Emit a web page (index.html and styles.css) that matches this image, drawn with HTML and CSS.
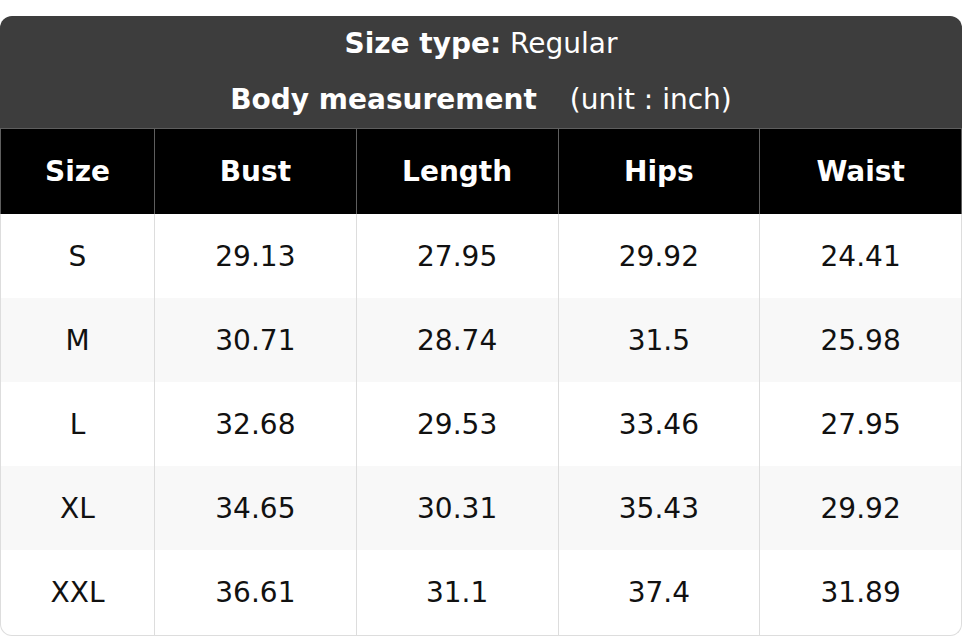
FILE: index.html
```html
<!DOCTYPE html>
<html>
<head>
<meta charset="utf-8">
<link rel="stylesheet" href="styles.css">
</head>
<body>
<div class="card">
  <div class="title">
    <div class="title-line first"><b>Size type:</b> Regular</div>
    <div class="title-line second"><b>Body measurement</b><span class="unit">(unit : inch)</span></div>
  </div>
  <table class="chart">
    <colgroup>
      <col class="c-size"><col><col><col><col>
    </colgroup>
    <thead>
      <tr><th>Size</th><th>Bust</th><th>Length</th><th>Hips</th><th>Waist</th></tr>
    </thead>
    <tbody>
      <tr><td>S</td><td>29.13</td><td>27.95</td><td>29.92</td><td>24.41</td></tr>
      <tr><td>M</td><td>30.71</td><td>28.74</td><td>31.5</td><td>25.98</td></tr>
      <tr><td>L</td><td>32.68</td><td>29.53</td><td>33.46</td><td>27.95</td></tr>
      <tr><td>XL</td><td>34.65</td><td>30.31</td><td>35.43</td><td>29.92</td></tr>
      <tr><td>XXL</td><td>36.61</td><td>31.1</td><td>37.4</td><td>31.89</td></tr>
    </tbody>
  </table>
</div>
</body>
</html>
```

FILE: styles.css
```css
html, body {
  margin: 0;
  padding: 0;
  background: #ffffff;
}
body {
  padding-top: 16px;
  font-family: "DejaVu Sans", sans-serif;
  font-size: 28px;
}
.card {
  width: 962px;
  border-radius: 12px 12px 0 0;
  overflow: hidden;
}
.title {
  background: #3d3d3d;
  color: #ffffff;
  text-align: center;
  padding: 8px 0 8px;
}
.title-line {
  line-height: 40px;
  white-space: nowrap;
}
.title-line.second {
  margin-top: 16px;
}
.title b {
  font-weight: bold;
}
.unit {
  padding-left: 33px;
}
.chart {
  width: 962px;
  border-collapse: separate;
  border-spacing: 0;
  table-layout: fixed;
}
.c-size {
  width: 155px;
}
.chart th, .chart td {
  text-align: center;
  padding: 0;
  height: 84px;
}
.chart th {
  height: 85px;
  background: #000000;
  color: #ffffff;
  font-weight: bold;
  border-top: 1px solid #5e5e5e;
  border-right: 1px solid #5e5e5e;
}
.chart th:first-child {
  border-left: 1px solid #5e5e5e;
}
.chart td {
  color: #111111;
  border-right: 1px solid #dddddd;
  background: #ffffff;
}
.chart td:first-child {
  border-left: 1px solid #dddddd;
}
.chart tbody tr:nth-child(even) td {
  background: #f8f8f8;
}
.chart tbody tr:last-child td {
  height: 85px;
  border-bottom: 1px solid #dddddd;
}
.chart tbody tr:last-child td:first-child {
  border-bottom-left-radius: 12px;
}
.chart tbody tr:last-child td:last-child {
  border-bottom-right-radius: 12px;
}
```
